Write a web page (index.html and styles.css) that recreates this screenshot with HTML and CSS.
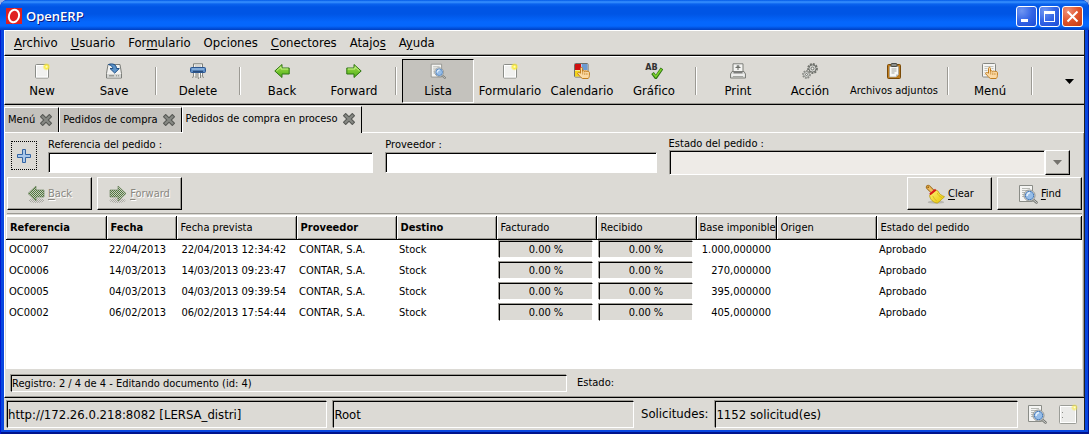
FILE: index.html
```html
<!DOCTYPE html>
<html lang="es">
<head>
<meta charset="utf-8">
<title>OpenERP</title>
<link rel="stylesheet" href="styles.css">
</head>
<body>
<svg class="sprites" aria-hidden="true">
  <defs>
    <linearGradient id="gold" x1="0" y1="0" x2="1" y2="1"><stop offset="0" stop-color="#fff27a"/><stop offset="1" stop-color="#e6c200"/></linearGradient>
    <linearGradient id="leaf" x1="0" y1="0" x2="0" y2="1"><stop offset="0" stop-color="#a4e04a"/><stop offset="1" stop-color="#4fae18"/></linearGradient>
    <radialGradient id="glow"><stop offset="0" stop-color="#fffde0"/><stop offset=".45" stop-color="#fbec3c"/><stop offset="1" stop-color="#f7e84a" stop-opacity=".15"/></radialGradient>
    <pattern id="dither" width="2" height="2" patternUnits="userSpaceOnUse"><rect width="2" height="2" fill="#4f7a3a"/><rect width="1" height="1" fill="#c8cac2"/><rect x="1" y="1" width="1" height="1" fill="#c8cac2"/></pattern>
    <pattern id="dither-gray" width="2" height="2" patternUnits="userSpaceOnUse"><rect width="1" height="1" fill="#a9a8a2"/><rect x="1" y="1" width="1" height="1" fill="#a9a8a2"/></pattern>
  </defs>
  <symbol id="i-new" viewBox="0 0 16 16">
    <rect x="1.5" y="1.5" width="13" height="13.5" rx="1" fill="#f1f1ef" stroke="#8b8d88"/>
    <rect x="2.5" y="2.5" width="11" height="11.5" fill="none" stroke="#fff"/>
    <circle cx="12.5" cy="3.8" r="3.8" fill="url(#glow)"/>
  </symbol>
  <symbol id="i-note" viewBox="0 0 20 20">
    <rect x="1.500" y="1.500" width="17" height="18" rx="1" fill="#ebebe9" stroke="#9b9d98"/>
    <rect x="2.500" y="2.500" width="15" height="16" fill="none" stroke="#fff"/>
    <path d="M4 8.500h1M4 13.500h1" stroke="#8b8d88"/>
    <circle cx="16.500" cy="3.500" r="3.500" fill="url(#glow)" opacity=".7"/>
  </symbol>
  <symbol id="i-save" viewBox="0 0 16 16">
    <path d="M2 1.500h12l1.500 9v4.500h-15v-4.500z" fill="#f2f2f0" stroke="#7b7d79"/>
    <path d="M1 11h14v3.500H1z" fill="#d4d5d2"/><path d="M3 12.800h5M10 12.800h1M12 12.800h1" stroke="#80827d"/>
    <path d="M2.500 1.500c4-1.500 8 0 8 4h2.800l-4.600 4.600L4 5.500h2.800c0-1.800-1.500-3-4.300-4z" fill="#5b93c9" stroke="#1f4f86"/>
  </symbol>
  <symbol id="i-delete" viewBox="0 0 16 16">
    <path d="M3.500 5V.800h9V5" fill="#f3f3f1" stroke="#7d7f7a"/><path d="M5 3h6" stroke="#b5b6b2"/>
    <rect x=".5" y="4.500" width="15" height="5" rx="1" fill="#5d8ec7" stroke="#2c5690"/>
    <path d="M2 6h12" stroke="#abcaeb"/><path d="M3 8.300h10" stroke="#1c3b66"/>
    <path d="M3.500 10v3l-1 2M6 10v5M8 10v4l.500 2M10.500 10v5M12.500 10v3l1 2" fill="none" stroke="#858782"/>
    <path d="M4.700 10v3M9.300 10v4M11.500 10v2" stroke="#fff"/>
  </symbol>
  <symbol id="i-back" viewBox="0 0 16 16">
    <path d="M.8 8L8 1.500v3.500h7.200v6H8v3.500z" fill="url(#leaf)" stroke="#2e7612" stroke-linejoin="round"/>
    <path d="M2.500 7.800L7 3.800V6h7.200" fill="none" stroke="#c9f08c"/>
  </symbol>
  <symbol id="i-forward" viewBox="0 0 16 16">
    <path d="M15.200 8L8 1.500v3.500H.8v6H8v3.500z" fill="url(#leaf)" stroke="#2e7612" stroke-linejoin="round"/>
    <path d="M1.800 6H9V3.800l4.500 4" fill="none" stroke="#c9f08c"/>
  </symbol>
  <symbol id="i-back-off" viewBox="0 0 18 20">
    <ellipse cx="9.500" cy="16.500" rx="8" ry="2.500" fill="url(#dither-gray)"/>
    <path d="M1 9.500L9 2v4h8v7H9v4z" fill="url(#dither)" stroke="#5f7a50" stroke-width=".6"/>
  </symbol>
  <symbol id="i-forward-off" viewBox="0 0 18 20">
    <ellipse cx="8.500" cy="16.500" rx="8" ry="2.500" fill="url(#dither-gray)"/>
    <path d="M17 9.500L9 2v4H1v7h8v4z" fill="url(#dither)" stroke="#5f7a50" stroke-width=".6"/>
  </symbol>
  <symbol id="i-find" viewBox="0 0 20 20">
    <path d="M1.500 1.500h13v16h-13z" fill="#f5f5f3" stroke="#8a8c87"/>
    <path d="M4 4.500h8M4 6.500h8M4 8.500h3M4 10.500h2M4 12.500h3" stroke="#b8bab5"/>
    <path d="M15.500 16l3 2.500" stroke="#70726e" stroke-width="2.500" stroke-linecap="round"/>
    <path d="M15.500 16l3 2.500" stroke="#d6d7d4" stroke-linecap="round"/>
    <circle cx="11.500" cy="11.500" r="5.500" fill="#eef1f4" stroke="#8c8e8a"/>
    <circle cx="11.500" cy="11.500" r="4.200" fill="#96bde8" stroke="#4a7cb8"/>
    <path d="M9 12c0-2 1-3 3-3.500" fill="none" stroke="#e4f0fc" stroke-width="1.500"/>
  </symbol>
  <symbol id="hand" viewBox="0 0 16 16">
    <path d="M6.500 5.500c0-1.500 2-1.500 2 0v3c.4-1 2-1 2.200.100.400-.9 2-.8 2.200.200.500-.8 2.300-.5 2.500.7V12.500c0 1.500-.6 2.200-1.200 3H8.500c-1.800-.8-3-3-4.800-4.700-.5-1.200 1-1.900 2.800-.6z" fill="#fbd9a4" stroke="#c17d1e"/>
    <path d="M8.700 9v2.500M10.800 9.500V12M12.900 10v2" stroke="#c98a32" stroke-width=".8"/>
  </symbol>
  <symbol id="i-calendar" viewBox="0 0 16 16">
    <rect x=".5" y=".5" width="13.500" height="13.500" rx="1" fill="#fff" stroke="#6d6f6b"/>
    <path d="M1 1h6v6H1z" fill="#d01010"/><path d="M7.500 1h6v6h-6z" fill="#6c9bd2"/><path d="M1 7.500h6v6H1z" fill="#f3d318"/><path d="M7.500 7.500h6v6h-6z" fill="#e58f28"/>
    <use href="#hand" width="16" height="16"/>
  </symbol>
  <symbol id="i-check" viewBox="0 0 16 16">
    <path d="M5.500 10l3.300 4.500L15 5.500" fill="none" stroke="#2e7612" stroke-width="3.200"/>
    <path d="M6 10.500l2.800 3.200 5.700-7.700" fill="none" stroke="#7ed32c" stroke-width="1.500"/>
  </symbol>
  <symbol id="i-print" viewBox="0 0 16 16">
    <path d="M3 9V.8h10V9" fill="#f4f4f2" stroke="#7c7e79"/>
    <path d="M8 2v5M5.500 4.500h5M6.500 3.200h3" stroke="#6b6d68"/>
    <path d="M2 8.500h12l1.500 2.500v4H.5v-4z" fill="#dddedb" stroke="#7c7e79"/><path d="M3.500 9.800h9" stroke="#555"/><path d="M1.500 12h13" stroke="#fff"/><path d="M3 13.500h10" stroke="#a2a49f"/>
  </symbol>
  <symbol id="i-gears" viewBox="0 0 16 16">
    <g fill="none" stroke="#6f716c"><circle cx="10.500" cy="5.500" r="4.500" stroke-width="1.800" stroke-dasharray="2 1"/><circle cx="10.500" cy="5.500" r="3.600" fill="#d5d6d3"/><circle cx="10.500" cy="5.500" r="1.400" fill="#f4f4f2"/>
    <circle cx="4.500" cy="11.500" r="3.600" stroke="#8b8d88" stroke-width="1.600" stroke-dasharray="1.700 1"/><circle cx="4.500" cy="11.500" r="2.800" stroke="#8b8d88" fill="#dfe0dd"/><circle cx="4.500" cy="11.500" r="1" fill="#f4f4f2"/></g>
  </symbol>
  <symbol id="i-clip" viewBox="0 0 16 16">
    <rect x="1.500" y="1.500" width="13" height="14" rx="1" fill="#c07c1c" stroke="#7a4a08"/>
    <path d="M3.500 3.500h9v8l-2.500 2.500h-6.500z" fill="#f8f8f6" stroke="#9c9e99" stroke-width=".7"/><path d="M12.500 11.500H10V14z" fill="#bfc0bc"/>
    <path d="M5.500 6h5M5.500 8h5M5.500 10h3" stroke="#a5a7a2"/><rect x="5" y=".5" width="6" height="3" rx="1" fill="#8e908b" stroke="#4a4c48"/>
  </symbol>
  <symbol id="i-menu" viewBox="0 0 16 16">
    <rect x=".5" y=".5" width="13" height="13.500" rx="1" fill="#f5f5f3" stroke="#858782"/>
    <path d="M2.500 3.500h9M2.500 5.500h3M9.500 5.500h2M2.500 7.500h3M2.500 9.500h1M2.500 11.500h1" stroke="#c0c2bd"/><use href="#hand" width="16" height="16"/>
  </symbol>
  <symbol id="i-close" viewBox="0 0 12 12">
    <path d="M2.700 2.700l6.600 6.600M9.300 2.700l-6.600 6.600" stroke="#555753" stroke-width="4.200" stroke-linecap="square"/>
    <path d="M2.700 2.700l6.600 6.600M9.300 2.700l-6.600 6.600" stroke="#868883" stroke-width="2.200" stroke-linecap="square"/>
  </symbol>
  <symbol id="i-plus" viewBox="0 0 14 14">
    <path d="M5.500.5h3v5h5v3h-5v5h-3v-5h-5v-3h5z" fill="#a9c7ea" stroke="#3465a4"/>
  </symbol>
  <symbol id="i-broom" viewBox="0 0 22 22">
    <ellipse cx="12" cy="20" rx="9" ry="1.800" fill="#b9b7b2"/>
    <path d="M3.500 3.500l5 5" stroke="#9a6414" stroke-width="5" stroke-linecap="round"/><path d="M3.500 3.500l5 5" stroke="#eebc5c" stroke-width="3.400" stroke-linecap="round"/><circle cx="3.500" cy="3.500" r="1" fill="#9a6414"/>
    <path d="M5 12.500l7-6 2.500 1.500c1 3 3.500 4.500 7 6-2 1.500-4 4.500-8 7-4-.5-8-3.500-8.500-8.500z" fill="url(#gold)" stroke="#b79a00" stroke-width=".8"/>
    <path d="M8.500 13c1 2.500 2.500 4 4.500 6M13.500 10c1 2.500 2.500 3.500 5 5" fill="none" stroke="#c9ac08" stroke-width=".7"/>
    <path d="M5.300 11.500l6.500-5.300" stroke="#d81818" stroke-width="2.200"/>
  </symbol>
</svg>

<div class="window">
  <header class="titlebar">
    <svg class="logo" viewBox="0 0 16 16" aria-hidden="true"><rect width="16" height="16" fill="#e01f1f"/><ellipse cx="8" cy="8" rx="5" ry="6.300" fill="none" stroke="#fff" stroke-width="2" transform="rotate(18 8 8)"/></svg>
    <h1>OpenERP</h1>
    <div class="controls">
      <button type="button" aria-label="Minimizar"><svg viewBox="0 0 19 19"><path d="M4 12h7v3H4z" fill="#fff"/></svg></button>
      <button type="button" aria-label="Maximizar"><svg viewBox="0 0 19 19"><path d="M4 4h11v11H4zM5 7v7h9V7z" fill="#fff" fill-rule="evenodd"/></svg></button>
      <button type="button" class="quit" aria-label="Cerrar"><svg viewBox="0 0 19 19"><path d="M4.500 4.500l10 10M14.500 4.500l-10 10" stroke="#fff" stroke-width="2"/></svg></button>
    </div>
  </header>

  <div class="client">
    <nav class="menubar">
      <button type="button"><u>A</u>rchivo</button>
      <button type="button"><u>U</u>suario</button>
      <button type="button">For<u>m</u>ulario</button>
      <button type="button">Opciones</button>
      <button type="button"><u>C</u>onectores</button>
      <button type="button">Atajo<u>s</u></button>
      <button type="button">A<u>y</u>uda</button>
    </nav>

    <div class="toolbar">
      <button type="button" class="tool"><svg><use href="#i-new"/></svg>New</button>
      <button type="button" class="tool"><svg><use href="#i-save"/></svg>Save</button>
      <span class="sep"></span>
      <button type="button" class="tool"><svg><use href="#i-delete"/></svg>Delete</button>
      <span class="sep"></span>
      <button type="button" class="tool"><svg><use href="#i-back"/></svg>Back</button>
      <button type="button" class="tool"><svg><use href="#i-forward"/></svg>Forward</button>
      <span class="sep"></span>
      <button type="button" class="tool pressed" aria-pressed="true"><svg><use href="#i-find"/></svg>Lista</button>
      <button type="button" class="tool"><svg><use href="#i-new"/></svg>Formulario</button>
      <button type="button" class="tool"><svg><use href="#i-calendar"/></svg>Calendario</button>
      <button type="button" class="tool"><span class="spell"><b>AB</b><svg><use href="#i-check"/></svg></span>Gráfico</button>
      <span class="sep"></span>
      <button type="button" class="tool"><svg><use href="#i-print"/></svg>Print</button>
      <button type="button" class="tool"><svg><use href="#i-gears"/></svg>Acción</button>
      <button type="button" class="tool wide"><svg><use href="#i-clip"/></svg>Archivos adjuntos</button>
      <span class="sep"></span>
      <button type="button" class="tool"><svg><use href="#i-menu"/></svg>Menú</button>
      <span class="sep"></span>
      <button type="button" class="overflow" aria-label="Más"><svg viewBox="0 0 9 5"><path d="M0 0h9L4.500 5z"/></svg></button>
    </div>

    <div class="tabs">
      <div class="tab"><button type="button">Menú</button><button type="button" aria-label="Cerrar Menú"><svg><use href="#i-close"/></svg></button></div>
      <div class="tab"><button type="button">Pedidos de compra</button><button type="button" aria-label="Cerrar Pedidos de compra"><svg><use href="#i-close"/></svg></button></div>
      <div class="tab active"><button type="button">Pedidos de compra en proceso</button><button type="button" aria-label="Cerrar Pedidos de compra en proceso"><svg><use href="#i-close"/></svg></button></div>
    </div>

    <main class="page">
      <form class="search">
        <button type="button" class="expand" aria-label="Más filtros"><svg><use href="#i-plus"/></svg></button>
        <div class="field"><label for="ref">Referencia del pedido :</label><input type="text" id="ref"></div>
        <div class="field"><label for="prov">Proveedor :</label><input type="text" id="prov"></div>
        <div class="field state"><label for="estado">Estado del pedido :</label>
          <div class="combo"><select id="estado"><option></option></select><span class="drop"><svg viewBox="0 0 9 5"><path d="M0 0h9L4.500 5z"/></svg></span></div>
        </div>
      </form>

      <div class="actions">
        <button type="button" class="btn" disabled><svg><use href="#i-back-off"/></svg><span><u>B</u>ack</span></button>
        <button type="button" class="btn" disabled><svg><use href="#i-forward-off"/></svg><span><u>F</u>orward</span></button>
        <button type="button" class="btn first"><svg><use href="#i-broom"/></svg><span><u>C</u>lear</span></button>
        <button type="button" class="btn"><svg><use href="#i-find"/></svg><span><u>F</u>ind</span></button>
      </div>

      <div class="list">
        <table>
          <colgroup><col class="w100"><col class="w70"><col class="w120"><col class="w100"><col class="w100"><col class="w100"><col class="w100"><col class="w80"><col class="w100"><col></colgroup>
          <thead><tr><th class="req">Referencia</th><th class="req">Fecha</th><th>Fecha prevista</th><th class="req">Proveedor</th><th class="req">Destino</th><th>Facturado</th><th>Recibido</th><th class="amount">Base imponible</th><th>Origen</th><th>Estado del pedido</th></tr></thead>
          <tbody>
            <tr><td>OC0007</td><td class="num">22/04/2013</td><td class="num">22/04/2013 12:34:42</td><td>CONTAR, S.A.</td><td>Stock</td><td class="bar"><span>0.00 %</span></td><td class="bar"><span>0.00 %</span></td><td class="num amount">1.000,000000</td><td></td><td>Aprobado</td></tr>
            <tr><td>OC0006</td><td class="num">14/03/2013</td><td class="num">14/03/2013 09:23:47</td><td>CONTAR, S.A.</td><td>Stock</td><td class="bar"><span>0.00 %</span></td><td class="bar"><span>0.00 %</span></td><td class="num amount">270,000000</td><td></td><td>Aprobado</td></tr>
            <tr><td>OC0005</td><td class="num">04/03/2013</td><td class="num">04/03/2013 09:39:54</td><td>CONTAR, S.A.</td><td>Stock</td><td class="bar"><span>0.00 %</span></td><td class="bar"><span>0.00 %</span></td><td class="num amount">395,000000</td><td></td><td>Aprobado</td></tr>
            <tr><td>OC0002</td><td class="num">06/02/2013</td><td class="num">06/02/2013 17:54:44</td><td>CONTAR, S.A.</td><td>Stock</td><td class="bar"><span>0.00 %</span></td><td class="bar"><span>0.00 %</span></td><td class="num amount">405,000000</td><td></td><td>Aprobado</td></tr>
          </tbody>
        </table>
      </div>

      <div class="record">
        <div class="sunken">Registro: 2 / 4 de 4 - Editando documento (id: 4)</div>
        <div>Estado:</div>
      </div>
    </main>

    <footer class="statusbar">
      <div class="sunken server">http://172.26.0.218:8082 [LERSA_distri]</div>
      <div class="sunken user">Root</div>
      <span class="caption">Solicitudes:</span>
      <div class="sunken requests">1152 solicitud(es)</div>
      <button type="button" aria-label="Buscar solicitudes"><svg><use href="#i-find"/></svg></button>
      <button type="button" aria-label="Nueva solicitud"><svg><use href="#i-note"/></svg></button>
    </footer>
  </div>
</div>
</body>
</html>
```

FILE: styles.css
```css
:root {
  --face: #dcdad5;
  --shade: #9c9a94;
  --tab: #c4c2bd;
  --small: 11px;
  --normal: 13px;
}

* { box-sizing: border-box; }

body {
  margin: 0;
  background: #9db4e4;
  color: #000;
  font: var(--normal)/16px "DejaVu Sans Condensed", "DejaVu Sans", sans-serif;
}

button, input, select { font: inherit; color: inherit; }
button { margin: 0; padding: 0; border: 0; background: none; white-space: nowrap; }
svg { display: block; flex: none; }
u { text-underline-offset: 2px; }
.sprites { position: absolute; width: 0; height: 0; }

.window {
  display: flex;
  flex-direction: column;
  min-height: 100vh;
  padding: 0 4px 4px;
  border-radius: 8px 8px 0 0;
  background: #0846e0;
  box-shadow: inset 1px 0 #0019cf, inset -1px 0 #00138c, inset 0 -2px #00138c;
}

.titlebar {
  display: flex;
  align-items: center;
  height: 30px;
  margin: 0 -4px;
  padding: 2px 6px 0;
  border-radius: 8px 8px 0 0;
  background: linear-gradient(#0058e6 0, #3a93ff 2px, #0a63ee 4px, #0055e5 7px, #0055e5 14px, #0567fd 22px, #0567fd 26px, #0048d0 29px, #0240c0 30px);
}
.logo { width: 16px; height: 16px; }
.titlebar h1 { margin: 0 0 0 4px; color: #fff; font: 600 13px/18px "Open Sans", sans-serif; text-shadow: 1px 1px #0a1883; }
.controls { display: flex; gap: 2px; margin-left: auto; }
.controls button {
  width: 21px;
  height: 21px;
  border: 1px solid #fff;
  border-radius: 3px;
  background: radial-gradient(circle at 25% 20%, #6f96f2, #3465e6 50%, #1c4bd6);
}
.controls .quit { background: radial-gradient(circle at 25% 20%, #ee9078, #e0532b 50%, #c23a12); }
.controls svg { width: 19px; height: 19px; }

.client { flex: 1; display: flex; flex-direction: column; border-right: 1px solid #222; background: var(--face); }

.menubar, .toolbar { display: flex; border-top: 1px solid #fff; border-left: 1px solid #fff; border-bottom: 1px solid #000; box-shadow: inset 0 -1px var(--shade); }
.menubar { height: 26px; gap: 13px; padding: 0 9px; }

.toolbar { height: 49px; padding: 2px 0 1px 1px; }
.tool { display: flex; flex-direction: column; align-items: center; width: 72px; padding: 4px 0 0; gap: 3px; line-height: 18px; }
.tool svg { width: 16px; height: 16px; }
.tool.wide { width: 96px; font-size: var(--small); }
.tool.pressed { background: var(--tab); border: 1px solid; border-color: #000 #fff #fff #000; padding-top: 3px; }
.spell { display: flex; height: 16px; }
.spell b { margin-right: -11px; font-size: 9px; line-height: 9px; color: #333; }
.sep { width: 2px; height: 28px; margin: 8px 5px 0; background: var(--shade); border-right: 1px solid #fff; }
.overflow { margin: 0 10px 0 auto; }
.overflow svg { width: 9px; height: 5px; }

.tabs { display: flex; align-items: flex-end; height: 28px; padding-top: 1px; font-size: var(--small); }
.tab { display: flex; align-items: center; gap: 5px; height: 25px; margin-bottom: 1px; padding: 0 6px 0 3px; border-top: 1px solid #fff; border-right: 1px solid #000; border-left: 1px solid #fff; background: var(--tab); }
.tab svg { width: 12px; height: 12px; }
.tab.active { height: 27px; margin: 0; padding-bottom: 3px; background: var(--face); z-index: 1; }

.page { flex: 1; display: flex; flex-direction: column; margin-top: -1px; padding: 0 2px; border-top: 1px solid #fff; border-left: 1px solid #fff; border-bottom: 1px solid #000; box-shadow: inset -1px -1px var(--shade); font-size: var(--small); }

.search { display: grid; grid-template-columns: 25px 325fr 271fr 401fr; column-gap: 12px; padding: 4px 12px 0 4px; }
.expand { display: grid; place-items: center; width: 26px; height: 29px; margin-top: 4px; border: 1px dotted #000; }
.expand svg { width: 14px; height: 14px; }
.field { display: flex; flex-direction: column; padding-top: 1px; line-height: 14px; }
.field.state { padding-top: 0; line-height: 13px; }
.field input, .combo select { border: 1px solid; border-color: var(--shade) #fff #fff var(--shade); border-radius: 0; outline: 0; box-shadow: inset 1px 1px #000; }
.field input { width: 100%; height: 21px; padding: 0 4px; background: #fff; }
.combo { display: flex; }
.combo select { flex: 1; min-width: 0; height: 25px; appearance: none; background: #eeebe7; }
.drop { display: grid; place-items: center; width: 25px; border: 1px solid; border-color: #fff #000 #000 #fff; box-shadow: inset -1px -1px var(--shade); fill: #75736e; }
.drop svg { width: 9px; height: 5px; }

.actions { display: flex; gap: 5px; padding: 2px 0 3px; border-bottom: 1px solid var(--shade); }
.btn { display: flex; align-items: center; justify-content: center; gap: 3px; width: 85px; height: 33px; border: 1px solid; border-color: #fff #000 #000 #fff; box-shadow: inset -1px -1px var(--shade); }
.btn svg { width: 20px; height: 22px; }
.btn:disabled { color: #8a8882; text-shadow: 1px 1px #fff; }
.btn:disabled svg { width: 18px; height: 20px; }
.btn.first { margin-left: auto; }

.list { flex: 1; margin: 1px 0 0 -1px; background: #fff; border-top: 1px solid #fff; }
table { width: 100%; table-layout: fixed; border-collapse: collapse; line-height: 15px; }
.w70 { width: 70px; } .w80 { width: 80px; } .w100 { width: 100px; } .w120 { width: 120px; }
th { height: 23px; padding: 0 0 0 4px; text-align: left; font-weight: 400; white-space: nowrap; background: var(--face); border-right: 1px solid #000; border-bottom: 1px solid #000; box-shadow: inset 1px 1px #fff, inset -1px -1px var(--shade); }
th.req { font-weight: 700; }
th.amount { padding-left: 3px; }
td { height: 21px; padding: 0 4px 0 3px; white-space: nowrap; }
td.num { padding: 0 10px 0 0; text-align: right; }
td.amount { padding-right: 5px; }
td.bar { padding: 0 3px; }
.bar span { display: block; height: 17px; text-align: center; background: var(--face); }
.bar span, .sunken { border: 1px solid; border-color: #000 #fff #fff #000; box-shadow: -1px -1px var(--shade); }

.record { display: flex; align-items: center; gap: 10px; height: 28px; padding: 0 4px; }
.record > * { flex: 1; }
.record .sunken { flex: 0 1 556px; height: 17px; line-height: 15px; }

.statusbar { display: flex; align-items: center; height: 32px; padding: 0 6px 0 3px; }
.statusbar .sunken { height: 27px; line-height: 25px; white-space: nowrap; }
.server { flex: 321; }
.user { flex: 301; margin-left: 6px; }
.caption { margin: 0 7px; }
.requests { flex: 303; margin-right: 9px; }
.statusbar svg { width: 20px; height: 20px; }
.statusbar button + button { margin-left: 11px; }
```
